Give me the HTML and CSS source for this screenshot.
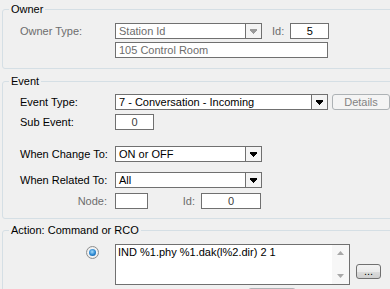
FILE: index.html
```html
<!DOCTYPE html>
<html lang="en">
<head>
    <meta charset="UTF-8">
    <title>Event Action</title>
    <link rel="stylesheet" href="styles.css">
</head>
<body>
    <div class="dialog">
        <fieldset class="group group-owner">
            <legend>Owner</legend>
            <div class="row">
                <span class="label disabled">Owner Type:</span>
                <div class="combo combo-mid">
                    <span class="combo-text disabled">Station Id</span>
                    <span class="combo-btn">
                        <svg width="7" height="5" viewBox="0 0 7 5"><path d="M0 0h7v2h-1v1h-1v1h-1v1h-1v-1h-1v-1h-1v-1h-1z" fill="#9a9a9a"/></svg>
                    </span>
                </div>
                <span class="label-id disabled">Id:</span>
                <div class="edit edit-num">5</div>
            </div>
            <div class="row row-next">
                <span class="label"></span>
                <div class="edit edit-wide disabled">105 Control Room</div>
            </div>
        </fieldset>

        <fieldset class="group group-event">
            <legend>Event</legend>
            <div class="row">
                <span class="label">Event Type:</span>
                <div class="combo combo-wide">
                    <span class="combo-text">7 - Conversation - Incoming</span>
                    <span class="combo-btn">
                        <svg width="7" height="5" viewBox="0 0 7 5"><path d="M0 0h7v2h-1v1h-1v1h-1v1h-1v-1h-1v-1h-1v-1h-1z" fill="#000"/></svg>
                    </span>
                </div>
                <button class="btn btn-details" disabled>Details</button>
            </div>
            <div class="row row-sub">
                <span class="label">Sub Event:</span>
                <div class="edit edit-num value">0</div>
            </div>
            <div class="row row-change">
                <span class="label">When Change To:</span>
                <div class="combo combo-mid">
                    <span class="combo-text">ON or OFF</span>
                    <span class="combo-btn">
                        <svg width="7" height="5" viewBox="0 0 7 5"><path d="M0 0h7v2h-1v1h-1v1h-1v1h-1v-1h-1v-1h-1v-1h-1z" fill="#000"/></svg>
                    </span>
                </div>
            </div>
            <div class="row row-related">
                <span class="label">When Related To:</span>
                <div class="combo combo-mid">
                    <span class="combo-text">All</span>
                    <span class="combo-btn">
                        <svg width="7" height="5" viewBox="0 0 7 5"><path d="M0 0h7v2h-1v1h-1v1h-1v1h-1v-1h-1v-1h-1v-1h-1z" fill="#000"/></svg>
                    </span>
                </div>
            </div>
            <div class="row row-node">
                <span class="label label-right disabled">Node:</span>
                <div class="edit edit-node"></div>
                <span class="label-node-id disabled">Id:</span>
                <div class="edit edit-node-id value">0</div>
            </div>
        </fieldset>

        <fieldset class="group group-action">
            <legend>Action: Command or RCO</legend>
            <div class="row row-action">
                <span class="label label-radio">
                    <span class="radio"><span class="radio-dot"></span></span>
                </span>
                <div class="memo">
                    <div class="memo-text">IND %1.phy %1.dak(l%2.dir) 2 1</div>
                    <div class="memo-scroll">
                        <svg width="7" height="4" viewBox="0 0 7 4"><path d="M3.5 0L7 4H0z" fill="#a8a8a8"/></svg>
                        <svg width="7" height="4" viewBox="0 0 7 4"><path d="M0 0h7L3.5 4z" fill="#a8a8a8"/></svg>
                    </div>
                </div>
                <button class="btn btn-more">...</button>
            </div>
            <div class="row row-below">
                <button class="btn btn-hidden"></button>
            </div>
        </fieldset>
    </div>
</body>
</html>
```

FILE: styles.css
```css
html, body {
    margin: 0;
    overflow: hidden;
}
body {
    background: #f0f0f0;
    font-family: "Liberation Sans", Arial, sans-serif;
    font-size: 11px;
    color: #000;
}
.dialog {
    width: 390px;
    height: 289px;
    overflow: hidden;
    padding-top: 3px;
    box-sizing: border-box;
}

/* Group boxes */
.group {
    width: 400px;
    margin: 0 0 0 2px;
    padding: 0;
    border: 1px solid #d5dfe5;
    border-radius: 3px;
    box-sizing: border-box;
    min-width: 0;
}
.group legend {
    margin-left: 6px;
    padding: 0 2px;
    line-height: 13px;
}
.group-owner {
    padding: 7px 0 10px;
}
.group-event {
    margin-top: 6px;
    padding: 6px 0 9px;
}
.group-action {
    margin-top: 5px;
    padding: 7px 0 10px;
}

/* Rows */
.row {
    display: flex;
    align-items: center;
    padding-left: 17px;
}
.row-next { margin-top: 3px; }
.row-sub { margin-top: 4px; }
.row-change { margin-top: 16px; }
.row-related { margin-top: 10px; }
.row-node { margin-top: 5px; }
.row-action { align-items: flex-start; }
.row-below { margin-top: 3px; }

.label {
    width: 95px;
    flex: none;
    white-space: nowrap;
}
.label-right {
    text-align: right;
    padding-right: 8px;
    box-sizing: border-box;
}
.label-radio {
    display: flex;
    justify-content: flex-end;
    padding: 2px 16px 0 0;
    box-sizing: border-box;
}
.disabled {
    color: #6d6d6d;
}
.label-id {
    margin: 0 6px 0 10px;
}
.label-node-id {
    width: 47px;
    text-align: right;
    margin-right: 6px;
}

/* Edit boxes */
.edit {
    height: 16px;
    box-sizing: border-box;
    border: 1px solid #707070;
    background: #fff;
    padding: 0 3px;
    line-height: 14px;
    white-space: nowrap;
}
.edit-num {
    width: 39px;
    text-align: center;
}
.value {
    color: #3c3c3c;
}
.edit-wide { width: 213px; }
.edit-node { width: 33px; }
.edit-node-id {
    width: 60px;
    text-align: center;
}

/* Combo boxes */
.combo {
    display: flex;
    height: 16px;
    box-sizing: border-box;
    border: 1px solid #707070;
    background: #fff;
}
.combo-mid { width: 147px; }
.combo-wide { width: 213px; }
.combo-text {
    flex: 1;
    padding-left: 3px;
    line-height: 14px;
    white-space: nowrap;
    overflow: hidden;
}
.combo-btn {
    width: 15px;
    border-left: 1px solid #707070;
    background: #f4f4f4;
    display: flex;
    align-items: center;
    justify-content: center;
}

/* Buttons */
.btn {
    font-family: inherit;
    font-size: 11px;
    padding: 0;
    height: 16px;
    border-radius: 3px;
    box-sizing: border-box;
    line-height: 13px;
}
.btn-details {
    width: 58px;
    margin-left: 4px;
    border: 1px solid #adb2b5;
    background: #f4f4f4;
    color: #838383;
}
.btn-more {
    width: 25px;
    height: 15px;
    margin: 20px 0 0 6px;
    border: 1px solid #707070;
    background: linear-gradient(#f2f2f2, #ebebeb 50%, #dddddd 51%, #cfcfcf);
    color: #000;
}
.btn-hidden {
    width: 48px;
    margin-left: 228px;
    border: 1px solid #adb2b5;
    background: #f4f4f4;
}

/* Radio */
.radio {
    width: 13px;
    height: 13px;
    box-sizing: border-box;
    border-radius: 50%;
    border: 1px solid #8e8f8f;
    background: radial-gradient(circle, #ffffff 30%, #dcdcdc);
    display: flex;
    align-items: center;
    justify-content: center;
}
.radio-dot {
    width: 7px;
    height: 7px;
    border-radius: 50%;
    background: radial-gradient(circle at 45% 40%, #a6dcfb, #2784cf 55%, #124f8c);
}

/* Multiline command box */
.memo {
    width: 235px;
    height: 41px;
    box-sizing: border-box;
    border: 1px solid #707070;
    background: #fff;
    display: flex;
}
.memo-text {
    flex: 1;
    padding: 1px 2px;
    line-height: 13px;
    white-space: nowrap;
    overflow: hidden;
}
.memo-scroll {
    width: 17px;
    background: #f7f7f7;
    display: flex;
    flex-direction: column;
    justify-content: space-between;
    align-items: center;
    padding: 6px 0;
    box-sizing: border-box;
}
```
